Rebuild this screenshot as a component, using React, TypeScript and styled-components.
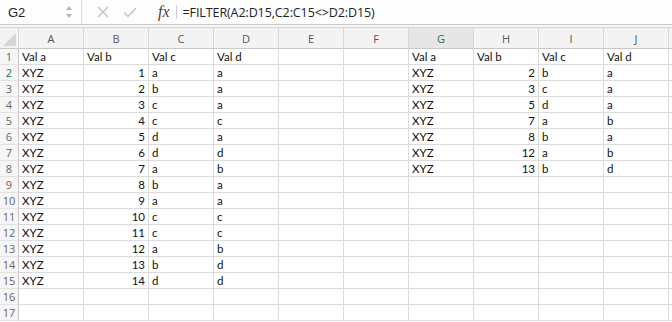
import React from "react";
import styled, { createGlobalStyle } from "styled-components";

const Global = createGlobalStyle`
  html, body {
    margin: 0;
    padding: 0;
    background: #ffffff;
    overflow: hidden;
  }
`;

const Page = styled.div`
  width: 672px;
  height: 322px;
  overflow: hidden;
  background: #fff;
  font-family: "Liberation Sans", Arial, sans-serif;
`;

const FormulaBar = styled.div`
  display: flex;
  align-items: center;
  height: 24px;
  background: #fdfdfd;
  border-bottom: 1px solid #c9c9c9;
`;

const NameBox = styled.div`
  display: flex;
  align-items: center;
  justify-content: space-between;
  width: 82px;
  height: 100%;
  box-sizing: border-box;
  padding: 0 8px 0 8px;
  border-right: 1px solid #dadada;
  font-size: 13px;
  color: #222;
`;

const IconGroup = styled.div`
  display: flex;
  align-items: center;
  height: 100%;
  padding-left: 14px;
  gap: 12px;
`;

const Fx = styled.span`
  font-family: "Liberation Serif", "Times New Roman", serif;
  font-style: italic;
  font-size: 16px;
  color: #444;
  margin-left: 8px;
  padding-right: 6px;
  border-right: 1px solid #cfcfcf;
  line-height: 14px;
`;

const Formula = styled.div`
  padding-left: 6px;
  font-size: 12.5px;
  color: #222;
  font-family: "Open Sans", "Liberation Sans", sans-serif;
  letter-spacing: -0.1px;
`;

const Gap = styled.div`
  height: 2px;
  background: #f6f6f6;
  border-bottom: 1px solid #d6d6d6;
`;

const Grid = styled.div`
  display: grid;
  grid-template-columns: 19px repeat(10, 65px) 1fr;
  grid-auto-rows: 16px;
  grid-template-rows: 21px;
`;

const ColHead = styled.div<{ $active?: boolean }>`
  display: flex;
  align-items: center;
  justify-content: center;
  background: ${(p) => (p.$active ? "#e6e6e6" : "#f3f3f3")};
  border-right: 1px solid #d8d8d8;
  border-bottom: 1px solid #c8c8c8;
  font-family: "Open Sans", "Liberation Sans", sans-serif;
  font-size: 11px;
  color: ${(p) => (p.$active ? "#217346" : "#555")};
`;

const Corner = styled.div`
  position: relative;
  background: #f3f3f3;
  border-right: 1px solid #d8d8d8;
  border-bottom: 1px solid #c8c8c8;
  overflow: hidden;
`;

const RowHead = styled.div<{ $active?: boolean }>`
  display: flex;
  align-items: center;
  justify-content: center;
  background: #f6f6f6;
  border-right: 1px solid #c8c8c8;
  border-bottom: 1px solid #e2e2e2;
  font-family: "Open Sans", "Liberation Sans", sans-serif;
  font-size: 11px;
  color: ${(p) => (p.$active ? "#217346" : "#666")};
`;

const Cell = styled.div<{ $num?: boolean }>`
  display: flex;
  align-items: center;
  justify-content: ${(p) => (p.$num ? "flex-end" : "flex-start")};
  padding: 0 3px;
  box-sizing: border-box;
  border-right: 1px solid #dcdcdc;
  border-bottom: 1px solid #dcdcdc;
  font-family: "Lato", "Liberation Sans", sans-serif;
  font-size: 11.5px;
  color: #111;
  white-space: nowrap;
  overflow: hidden;
`;

const cols = ["A", "B", "C", "D", "E", "F", "G", "H", "I", "J", ""];

const left: [number, string, string][] = [
  [1, "a", "a"],
  [2, "b", "a"],
  [3, "c", "a"],
  [4, "c", "c"],
  [5, "d", "a"],
  [6, "d", "d"],
  [7, "a", "b"],
  [8, "b", "a"],
  [9, "a", "a"],
  [10, "c", "c"],
  [11, "c", "c"],
  [12, "a", "b"],
  [13, "b", "d"],
  [14, "d", "d"],
];

const right: [number, string, string][] = [
  [2, "b", "a"],
  [3, "c", "a"],
  [5, "d", "a"],
  [7, "a", "b"],
  [8, "b", "a"],
  [12, "a", "b"],
  [13, "b", "d"],
];

type Val = { text: string; num?: boolean };

function rowValues(r: number): Val[] {
  const out: Val[] = Array.from({ length: 11 }, () => ({ text: "" }));
  if (r === 1) {
    ["Val a", "Val b", "Val c", "Val d"].forEach((t, i) => {
      out[i] = { text: t };
      out[6 + i] = { text: t };
    });
    return out;
  }
  const l = left[r - 2];
  if (l) {
    out[0] = { text: "XYZ" };
    out[1] = { text: String(l[0]), num: true };
    out[2] = { text: l[1] };
    out[3] = { text: l[2] };
  }
  const g = right[r - 2];
  if (g) {
    out[6] = { text: "XYZ" };
    out[7] = { text: String(g[0]), num: true };
    out[8] = { text: g[1] };
    out[9] = { text: g[2] };
  }
  return out;
}

const App: React.FC = () => {
  const rows = Array.from({ length: 17 }, (_, i) => i + 1);

  return (
    <Page>
      <Global />
      <FormulaBar>
        <NameBox>
          <span>G2</span>
          <svg width="8" height="16" viewBox="0 0 8 16">
            <path d="M4 2 L7 6 L1 6 Z" fill="#b5b5b5" />
            <path d="M1 10 L7 10 L4 14 Z" fill="#b5b5b5" />
          </svg>
        </NameBox>
        <IconGroup>
          <svg width="14" height="14" viewBox="0 0 14 14">
            <path d="M2 2 L12 12 M12 2 L2 12" stroke="#c4c4c4" strokeWidth="1.4" />
          </svg>
          <svg width="16" height="14" viewBox="0 0 16 14">
            <path d="M2 7.5 L6 11.5 L14 3" stroke="#c4c4c4" strokeWidth="1.4" fill="none" />
          </svg>
          <Fx>fx</Fx>
        </IconGroup>
        <Formula>=FILTER(A2:D15,C2:C15&lt;&gt;D2:D15)</Formula>
      </FormulaBar>
      <Gap />
      <Grid>
        <Corner>
          <svg width="18" height="20" viewBox="0 0 18 20" style={{ position: "absolute", left: 0, top: 0 }}>
            <path d="M16 5 L16 18 L3 18 Z" fill="#d6d6d6" />
          </svg>
        </Corner>
        {cols.map((c, i) => (
          <ColHead key={i} $active={c === "G"}>
            {c}
          </ColHead>
        ))}
        {rows.map((r) => (
          <React.Fragment key={r}>
            <RowHead $active={r === 2}>{r}</RowHead>
            {rowValues(r).map((v, i) => (
              <Cell key={i} $num={v.num}>
                {v.text}
              </Cell>
            ))}
          </React.Fragment>
        ))}
      </Grid>
    </Page>
  );
};

export default App;
